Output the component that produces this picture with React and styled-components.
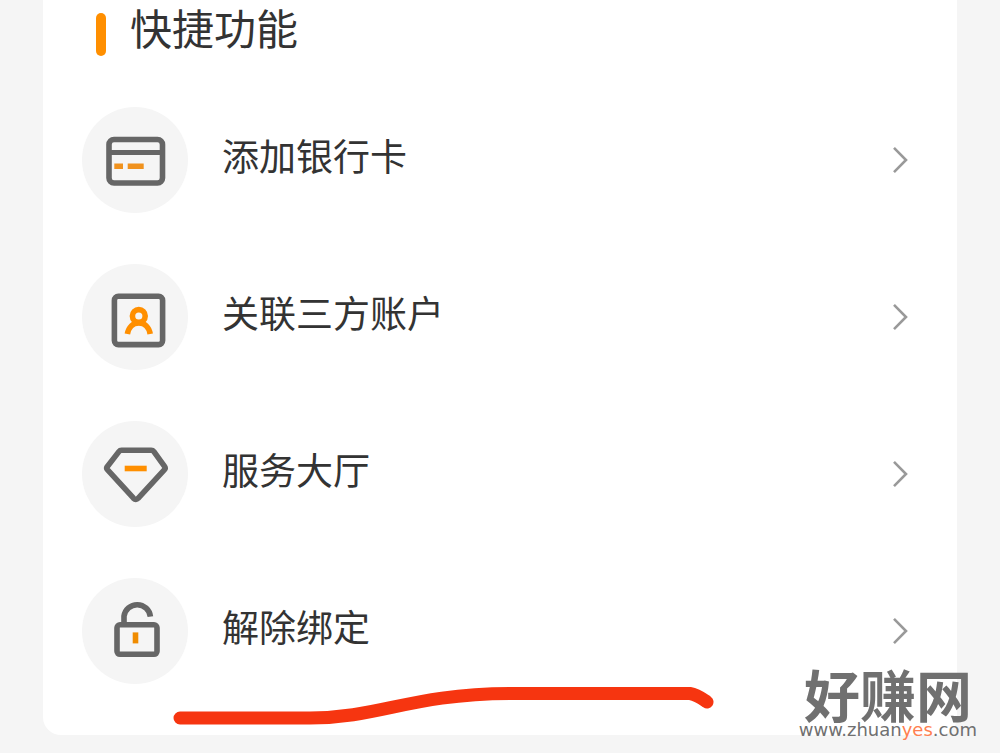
import React from "react";
import styled, { createGlobalStyle } from "styled-components";

const GlobalStyle = createGlobalStyle`
  * {
    box-sizing: border-box;
  }

  body {
    margin: 0;
    background-color: #f5f5f5;
    color: #333;
    font-family: "Noto Sans CJK SC", "Noto Sans", sans-serif;
  }
`;

const Page = styled.div`
  position: relative;
  min-height: 100vh;
  padding: 0 43px 18px;
`;

const Card = styled.main`
  position: relative;
  padding-bottom: 51px;
  border-radius: 0 0 18px 18px;
  background-color: #fff;
`;

const Header = styled.header`
  display: flex;
  align-items: flex-end;
  gap: 24px;
  height: 56px;
  padding-left: 53px;
`;

const Accent = styled.span`
  width: 10px;
  height: 43px;
  border-radius: 5px;
  background-color: #ff8f00;
`;

const Title = styled.h1`
  margin: 0;
  padding-bottom: 8px;
  font-size: 42px;
  font-weight: 400;
  line-height: 42px;
`;

const List = styled.ul`
  display: flex;
  flex-direction: column;
  gap: 51px;
  margin: 51px 0 0;
  padding: 0;
  list-style: none;
`;

const Row = styled.a`
  display: flex;
  align-items: center;
  padding: 0 49px 0 39px;
  color: inherit;
  text-decoration: none;
`;

const IconCircle = styled.span`
  width: 106px;
  height: 106px;
  border-radius: 50%;
  background-color: #f5f5f5;

  svg {
    display: block;
  }
`;

const Label = styled.span`
  flex: 1;
  padding: 0 0 10px 34px;
  font-size: 37px;
  line-height: 48px;
`;

const Scribble = styled.svg`
  position: absolute;
  left: 130px;
  bottom: 9px;
  pointer-events: none;
`;

const Watermark = styled.div`
  position: absolute;
  right: 23px;
  bottom: 14px;
  display: flex;
  flex-direction: column;
  align-items: center;
  color: #707070;
`;

const WatermarkName = styled.span`
  font-size: 56px;
  font-weight: 700;
  line-height: 56px;
`;

const WatermarkUrl = styled.span`
  font-family: "DejaVu Sans", sans-serif;
  font-size: 18px;
  line-height: 18px;

  em {
    color: #ff7f50;
    font-style: normal;
  }
`;

const iconProps = {
  width: 106,
  height: 106,
  viewBox: "0 0 106 106",
  fill: "none",
  stroke: "#666",
  strokeWidth: 5.6,
  "aria-hidden": true,
};

function BankCardIcon() {
  return (
    <svg {...iconProps}>
      <rect x="27" y="32.5" width="53.5" height="43.5" rx="5" />
      <path d="M27 45.6h53.5" strokeWidth="5" />
      <path d="M32.3 59.3H41M45.7 59.3h16" stroke="#f0921e" />
    </svg>
  );
}

function AccountIcon() {
  return (
    <svg {...iconProps}>
      <rect x="32.4" y="32.2" width="48.2" height="48.4" rx="4" />
      <g stroke="#ff8f00">
        <circle cx="56.8" cy="52" r="6.4" />
        <path d="M45.4 70c1.2-6.8 5.5-11 11.4-11s10.2 4.2 11.4 11" />
      </g>
    </svg>
  );
}

function DiamondIcon() {
  return (
    <svg {...iconProps} strokeLinejoin="round">
      <path d="M39.5 29.3H69.3Q70.9 29.3 71.9 30.6L82.7 45.7Q83.8 47.3 82.5 48.7L56.3 77.2Q53.9 79.7 51.5 77.2L25.4 48.7Q24.1 47.3 25.2 45.7L36.9 30.6Q37.9 29.3 39.5 29.3Z" />
      <path d="M42.7 47.5h22" stroke="#ff8f00" />
    </svg>
  );
}

function UnlockIcon() {
  return (
    <svg {...iconProps}>
      <rect x="35" y="46.8" width="40" height="29.5" rx="3" />
      <path d="M42 47V38.2A13.3 13.3 0 0 1 68.4 38.6" />
      <path d="M53.5 54.4v11" stroke="#f08c00" />
    </svg>
  );
}

function Chevron() {
  return (
    <svg width="16" height="28" viewBox="0 0 16 28" fill="none" aria-hidden="true">
      <path d="M2 1.8L14 14L2 26.2" stroke="#999" strokeWidth="2.6" />
    </svg>
  );
}

const items = [
  { id: "bank-card", label: "添加银行卡", Icon: BankCardIcon },
  { id: "accounts", label: "关联三方账户", Icon: AccountIcon },
  { id: "service", label: "服务大厅", Icon: DiamondIcon },
  { id: "unbind", label: "解除绑定", Icon: UnlockIcon },
];

function App() {
  return (
    <Page>
      <GlobalStyle />
      <Card>
        <Header>
          <Accent />
          <Title>快捷功能</Title>
        </Header>
        <List>
          {items.map(({ id, label, Icon }) => (
            <li key={id}>
              <Row href={`#${id}`}>
                <IconCircle>
                  <Icon />
                </IconCircle>
                <Label>{label}</Label>
                <Chevron />
              </Row>
            </li>
          ))}
        </List>
        <Scribble width="542" height="40" viewBox="0 0 542 40" fill="none" aria-hidden="true">
          <path
            d="M7 32H137C207 32 237 8 337 7.5H517C524 8.5 529 12.5 534 16"
            stroke="#f63510"
            strokeWidth="13"
            strokeLinecap="round"
            strokeLinejoin="round"
          />
        </Scribble>
      </Card>
      <Watermark>
        <WatermarkName>好赚网</WatermarkName>
        <WatermarkUrl>
          www.zhuan<em>yes</em>.com
        </WatermarkUrl>
      </Watermark>
    </Page>
  );
}

export default App;
